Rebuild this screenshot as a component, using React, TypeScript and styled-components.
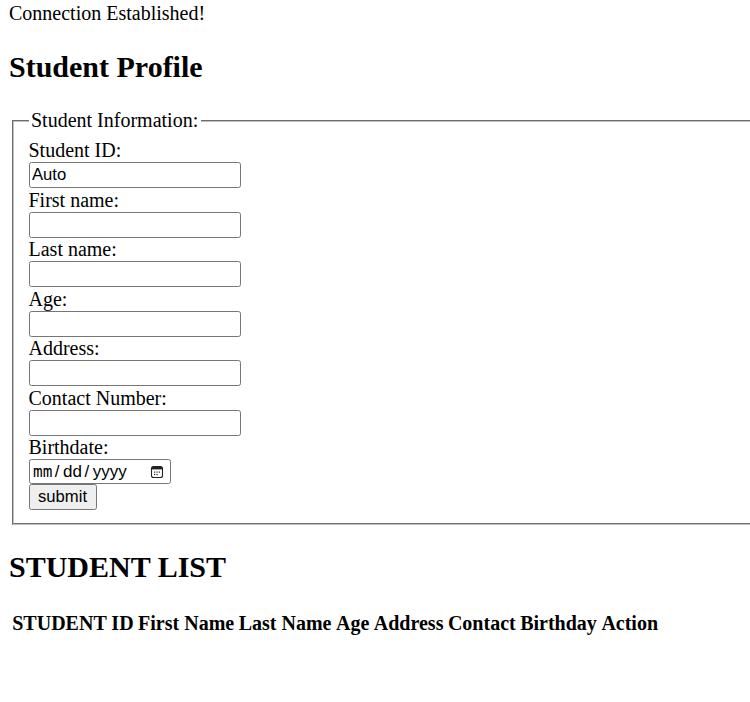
import React from "react";
import styled, { createGlobalStyle } from "styled-components";

const GlobalStyle = createGlobalStyle`
  html, body {
    margin: 0;
    padding: 0;
    background: #ffffff;
    overflow: hidden;
  }
  body {
    font-family: "Liberation Serif", "Times New Roman", serif;
    color: #000000;
  }
`;

const Page = styled.div`
  padding: 2px 0 0 9px;
  font-size: 20px;
  line-height: 23px;
`;

const Status = styled.div`
  font-size: 20px;
  line-height: 23px;
`;

const Section = styled.section`
  display: block;
`;

const Title = styled.h1`
  margin: 24.9px 0;
  font-size: 30px;
  line-height: 34.5px;
  font-weight: bold;
`;

const SubTitle = styled.h2`
  margin: 24.9px 0;
  font-size: 30px;
  line-height: 34.5px;
  font-weight: bold;
`;

const Fieldset = styled.fieldset`
  margin: 0 2.5px;
  width: 780px;
  border: 2px groove rgb(192, 192, 192);
  padding: 7px 15px 12.5px;
  min-width: 0;
`;

const Legend = styled.legend`
  padding: 0 2.5px;
  font-size: 20px;
  line-height: 23px;
`;

const Label = styled.label`
  display: block;
  font-size: 20px;
  line-height: 23px;
`;

const TextInput = styled.input`
  display: block;
  box-sizing: border-box;
  width: 212px;
  height: 26px;
  margin: 0 0 0.5px 0;
  padding: 1.25px 2.5px;
  border: 1px solid #767676;
  border-radius: 2.5px;
  background: #ffffff;
  font-family: "Liberation Sans", Arial, sans-serif;
  font-size: 16.67px;
  color: #000000;
`;

const DateField = styled.div`
  display: flex;
  align-items: center;
  box-sizing: border-box;
  width: 142px;
  height: 25px;
  padding: 0 6px 0 3.5px;
  border: 1px solid #767676;
  border-radius: 2.5px;
  background: #ffffff;
  font-family: "Liberation Sans", Arial, sans-serif;
  font-size: 17px;
  line-height: 19px;
  color: #000000;
`;

const DateText = styled.span`
  flex: 1;
  display: flex;
  align-items: baseline;
  white-space: nowrap;
`;

const DatePart = styled.span<{ $mono?: boolean }>`
  font-family: ${(p) =>
    p.$mono
      ? `"DejaVu Sans Mono", "Liberation Mono", monospace`
      : `"Liberation Sans", Arial, sans-serif`};
  font-size: ${(p) => (p.$mono ? "16px" : "17px")};
`;

const DateSep = styled.span`
  padding: 0 3.5px 0 2.5px;
`;

const CalendarIcon = styled.svg`
  display: block;
  flex: none;
  width: 14px;
  height: 14px;
`;

const SubmitButton = styled.button`
  display: block;
  box-sizing: border-box;
  width: 68px;
  height: 26px;
  margin: 0;
  padding: 1.25px 7.5px;
  border: 1px solid #767676;
  border-radius: 2.5px;
  background: #efefef;
  font-family: "Liberation Sans", Arial, sans-serif;
  font-size: 16.67px;
  color: #000000;
`;

const Table = styled.table`
  border-collapse: separate;
  border-spacing: 2.5px;
`;

const HeadCell = styled.th`
  padding: 1.25px;
  font-size: 20px;
  line-height: 23px;
  font-weight: bold;
  text-align: center;
`;

const fields: { id: string; label: string; value?: string }[] = [
  { id: "studentId", label: "Student ID:", value: "Auto" },
  { id: "firstName", label: "First name:" },
  { id: "lastName", label: "Last name:" },
  { id: "age", label: "Age:" },
  { id: "address", label: "Address:" },
  { id: "contact", label: "Contact Number:" },
];

const columns = [
  "STUDENT ID",
  "First Name",
  "Last Name",
  "Age",
  "Address",
  "Contact",
  "Birthday",
  "Action",
];

function Calendar() {
  return (
    <CalendarIcon viewBox="0 0 14 14" aria-hidden="true">
      <rect
        x="1.5"
        y="1.5"
        width="11"
        height="11"
        rx="2"
        fill="none"
        stroke="#222"
        strokeWidth="1.1"
      />
      <rect x="2" y="2" width="10" height="2.4" fill="#222" />
      <g fill="#222">
        <rect x="4" y="6.5" width="1.2" height="1.2" />
        <rect x="6.4" y="6.5" width="1.2" height="1.2" />
        <rect x="8.8" y="6.5" width="1.2" height="1.2" />
        <rect x="4" y="8.9" width="1.2" height="1.2" />
        <rect x="6.4" y="8.9" width="1.2" height="1.2" />
      </g>
    </CalendarIcon>
  );
}

export default function App() {
  return (
    <>
      <GlobalStyle />
      <Page>
        <Status>Connection Established!</Status>
        <Section>
          <Title>Student Profile</Title>
          <form onSubmit={(e) => e.preventDefault()}>
            <Fieldset>
              <Legend>Student Information:</Legend>
              {fields.map((f) => (
                <React.Fragment key={f.id}>
                  <Label htmlFor={f.id}>{f.label}</Label>
                  <TextInput
                    id={f.id}
                    type="text"
                    defaultValue={f.value}
                    readOnly={!!f.value}
                  />
                </React.Fragment>
              ))}
              <Label htmlFor="birthdate">Birthdate:</Label>
              <DateField id="birthdate" role="textbox" aria-label="Birthdate">
                <DateText>
                  <DatePart $mono>mm</DatePart>
                  <DateSep>/</DateSep>
                  <DatePart>dd</DatePart>
                  <DateSep>/</DateSep>
                  <DatePart>yyyy</DatePart>
                </DateText>
                <Calendar />
              </DateField>
              <SubmitButton type="submit">submit</SubmitButton>
            </Fieldset>
          </form>
        </Section>
        <SubTitle>STUDENT LIST</SubTitle>
        <Table>
          <thead>
            <tr>
              {columns.map((c) => (
                <HeadCell key={c}>{c}</HeadCell>
              ))}
            </tr>
          </thead>
          <tbody />
        </Table>
      </Page>
    </>
  );
}
